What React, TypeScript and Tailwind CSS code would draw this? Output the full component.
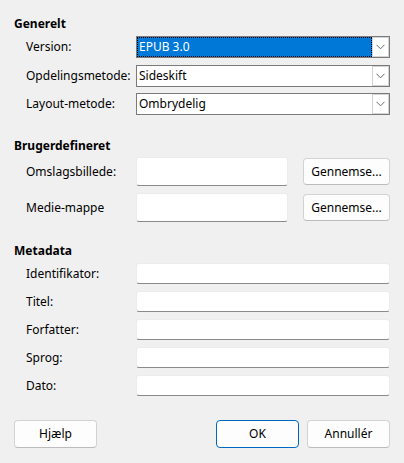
const font = { fontFamily: '"Noto Sans", "Open Sans", sans-serif' };

const Chevron = () => (
  <svg width="9" height="6" viewBox="0 0 9 6" fill="none">
    <path d="M0.5 0.8 L4.5 4.8 L8.5 0.8" stroke="#6b6b6b" strokeWidth="1" />
  </svg>
);

const Label = ({ children }: { children: React.ReactNode }) => (
  <span className="w-[122px] shrink-0 pl-[12px] text-[12px] text-black whitespace-nowrap">{children}</span>
);

const Combo = ({ label, value, selected }: { label: string; value: string; selected?: boolean }) => (
  <div className="flex items-center">
    <Label>{label}</Label>
    <div className="flex-1 h-[22px] flex border border-[#7a7a7a] bg-white">
      <div
        className={
          selected
            ? "flex-1 flex items-center pl-[1px] bg-[#0078d7] text-white text-[12px] border border-dotted border-black"
            : "flex-1 flex items-center pl-[2px] text-black text-[12px]"
        }
      >
        {value}
      </div>
      <div className="w-[17px] flex items-center justify-center border border-[#d4d4d4] bg-white">
        <Chevron />
      </div>
    </div>
  </div>
);

const Field = ({ label }: { label: string }) => (
  <div className="flex items-center">
    <Label>{label}</Label>
    <div className="flex-1 h-[21px] bg-white border border-[#ececec] border-b-[#8a8a8a] rounded-[3px]" />
  </div>
);

const Button = ({ children, primary }: { children: React.ReactNode; primary?: boolean }) => (
  <button
    className={
      primary
        ? "w-[83px] h-[28px] rounded-[4px] bg-[#fdfdfd] border border-[#0067c0] text-[12px] text-black"
        : "w-[83px] h-[28px] rounded-[4px] bg-[#fdfdfd] border border-[#d3d3d3] border-b-[#bcbcbc] text-[12px] text-black"
    }
  >
    {children}
  </button>
);

const Browse = ({ label }: { label: string }) => (
  <div className="flex items-center">
    <Label>{label}</Label>
    <div className="w-[152px] h-[29px] bg-white border border-[#ececec] border-b-[#8a8a8a] rounded-[3px]" />
    <div className="ml-auto">
      <button className="w-[87px] h-[27px] rounded-[4px] bg-[#fdfdfd] border border-[#d3d3d3] border-b-[#bcbcbc] text-[12px] text-black">
        Gennemse...
      </button>
    </div>
  </div>
);

export default function App() {
  return (
    <div className="w-[404px] h-[463px] bg-[#f0f0f0] px-[14px] overflow-hidden" style={font}>
      <h2 className="pt-[16px] text-[12px] leading-[16px] font-bold text-black">Generelt</h2>
      <div className="mt-[4px] flex flex-col gap-[6.5px]">
        <Combo label="Version:" value="EPUB 3.0" selected />
        <Combo label="Opdelingsmetode:" value="Sideskift" />
        <Combo label="Layout-metode:" value="Ombrydelig" />
      </div>

      <h2 className="mt-[23px] text-[12px] leading-[16px] font-bold text-black">Brugerdefineret</h2>
      <div className="mt-[3px] flex flex-col gap-[7px]">
        <Browse label="Omslagsbillede:" />
        <Browse label="Medie-mappe" />
      </div>

      <h2 className="mt-[21px] text-[12px] leading-[16px] font-bold text-black">Metadata</h2>
      <div className="mt-[4px] flex flex-col gap-[7px]">
        <Field label="Identifikator:" />
        <Field label="Titel:" />
        <Field label="Forfatter:" />
        <Field label="Sprog:" />
        <Field label="Dato:" />
      </div>

      <div className="mt-[24px] flex items-center">
        <Button>Hjælp</Button>
        <div className="ml-auto flex gap-[8px]">
          <Button primary>OK</Button>
          <Button>Annullér</Button>
        </div>
      </div>
    </div>
  );
}
